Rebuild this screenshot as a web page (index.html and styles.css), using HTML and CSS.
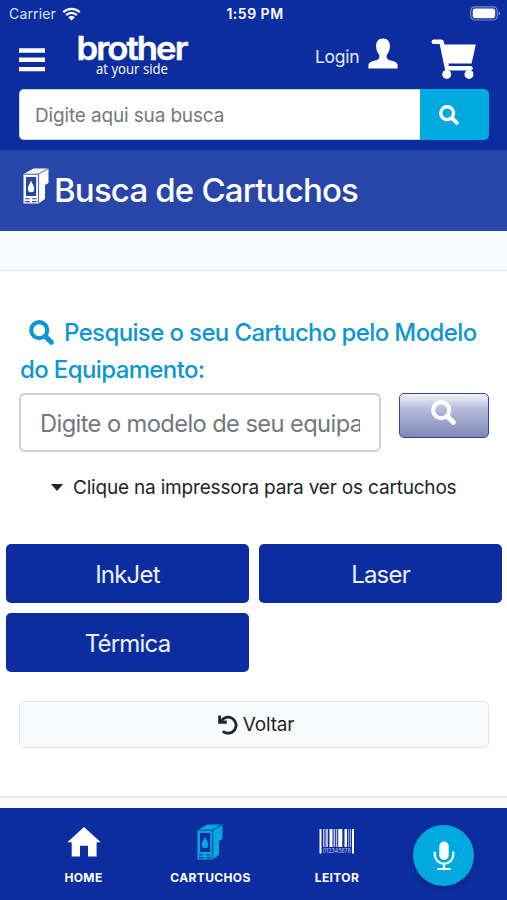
FILE: index.html
```html
<!DOCTYPE html>
<html lang="pt-br">
<head>
    <meta charset="UTF-8">
    <meta name="viewport" content="width=device-width, initial-scale=1.0">
    <title>Busca de Cartuchos</title>
    <link rel="stylesheet" href="styles.css">
</head>
<body>
    <!-- Ícones reutilizados -->
    <svg class="sprite" width="0" height="0">
        <symbol id="icon-search" viewBox="0 0 24 24">
            <circle cx="9.8" cy="9.8" r="7.7" fill="none" stroke="currentColor" stroke-width="4"/>
            <path d="M15.8 15.8L21.4 21.4" stroke="currentColor" stroke-width="4.8" stroke-linecap="round"/>
        </symbol>
        <symbol id="icon-cartridge" viewBox="0 0 26 36">
            <path fill="currentColor" d="M0.5 6L10.5 0.5H25.5V15L22 17V31L15.5 35.5H0.5Z"/>
            <path class="cut" d="M1 6.2H15.3L25 0.8M15.6 6.2V35" fill="none" stroke-width="0.9"/>
            <path class="cut-fill" d="M3 9H13.2V28H3ZM2 30.2H6.8V31.3H2ZM9 30.2H13.8V31.3H9ZM2 33H6.8V34.2H2ZM9 33H13.8V34.2H9Z"/>
            <path fill="currentColor" d="M8 12.5C9 16 11.3 17.8 11.3 20.8A3.2 3.5 0 0 1 4.8 20.8C4.8 17.8 7 16 8 12.5Z"/>
        </symbol>
    </svg>

    <header class="header">
        <div class="status-bar">
            <div class="carrier">
                <span class="carrier-name">Carrier</span>
                <svg width="19" height="14" viewBox="0 0 19 14">
                    <path d="M1.3 5.2A11.6 11.6 0 0 1 17.7 5.2M4.2 8.1A7.5 7.5 0 0 1 14.8 8.1" fill="none" stroke="#fff" stroke-width="2.3"/>
                    <path d="M9.5 13.6L6.2 10.3A4.8 4.8 0 0 1 12.8 10.3Z" fill="#fff"/>
                </svg>
            </div>
            <span class="clock">1:59 PM</span>
            <svg class="battery" width="31" height="15" viewBox="0 0 31 15">
                <rect x="0.8" y="0.8" width="26.4" height="13.2" rx="4" fill="none" stroke="#7889cb" stroke-width="1.2"/>
                <rect x="2.7" y="2.6" width="22.5" height="9.6" rx="2.3" fill="#fff"/>
                <path d="M28.6 5.2Q30.3 6 30.3 7.4T28.6 9.6Z" fill="#7889cb"/>
            </svg>
        </div>

        <div class="top-bar">
            <svg class="menu" width="26" height="24" viewBox="0 0 26 24">
                <path d="M0 2.5H26M0 11.8H26M0 21.1H26" stroke="#fff" stroke-width="4.4"/>
            </svg>
            <svg class="logo" width="114" height="52" viewBox="0 0 114 52">
                <text class="logo-name" x="-0.5" y="31.5" textLength="110" lengthAdjust="spacingAndGlyphs">brother</text>
                <text class="logo-tag" x="19" y="45.5" textLength="72" lengthAdjust="spacingAndGlyphs">at your side</text>
            </svg>
            <span class="login">Login</span>
            <svg class="user" width="30" height="31" viewBox="0 0 30 31">
                <path fill="#fff" d="M15 0.5C19.6 0.5 22.2 4 21.9 8.6C21.7 12 20.8 14.5 18.8 16.8C18.2 19.2 18.8 21 21 22C25 23.3 29.2 23.7 29.6 27V30.4H0.4V27C0.8 23.7 5 23.3 9 22C11.2 21 11.8 19.2 11.2 16.8C9.2 14.5 8.3 12 8.1 8.6C7.8 4 10.4 0.5 15 0.5Z"/>
            </svg>
            <svg class="cart" width="46" height="41" viewBox="0 0 46 41">
                <path d="M2.8 2.8H10.5L16.2 29.8" fill="none" stroke="#fff" stroke-width="4.6" stroke-linecap="round" stroke-linejoin="round"/>
                <path fill="#fff" d="M10 5.4H44.8L40.6 24.6H14.3Z"/>
                <path fill="#fff" d="M15 27H39.5A1.5 1.5 0 0 1 39.5 31.6H15Z"/>
                <circle cx="15.7" cy="35.4" r="4.5" fill="#fff"/>
                <circle cx="38" cy="35.4" r="4.5" fill="#fff"/>
            </svg>
        </div>

        <div class="search">
            <input class="search-input" type="text" placeholder="Digite aqui sua busca">
            <button class="search-button"><svg width="20" height="20"><use href="#icon-search"/></svg></button>
        </div>
    </header>

    <div class="page-title">
        <svg width="26" height="36"><use href="#icon-cartridge"/></svg>
        <h1>Busca de Cartuchos</h1>
    </div>
    <div class="breadcrumb"></div>

    <main class="content">
        <h2 class="subtitle">
            <svg width="25" height="25"><use href="#icon-search"/></svg><span class="line-one">Pesquise o seu Cartucho pelo Modelo</span>
            <span class="line-two">do Equipamento:</span>
        </h2>

        <div class="model-search">
            <input class="model-input" type="text" placeholder="Digite o modelo de seu equipamento">
            <button class="model-button"><svg width="25" height="25"><use href="#icon-search"/></svg></button>
        </div>

        <p class="hint"><span class="caret"></span><span>Clique na impressora para ver os cartuchos</span></p>

        <div class="types">
            <button class="type-button">InkJet</button>
            <button class="type-button">Laser</button>
            <button class="type-button">Térmica</button>
        </div>

        <button class="back-button">
            <svg width="20" height="20" viewBox="0 0 20 20">
                <path d="M3.2 6.2A8 8 0 1 1 4.8 16.2" fill="none" stroke="#212529" stroke-width="2.8"/>
                <path d="M0.2 0.4H3V5.6H8.8V8.8H0.2Z" fill="#212529"/>
            </svg>
            <span>Voltar</span>
        </button>
    </main>

    <nav class="bottom-nav">
        <a class="nav-item">
            <svg width="34" height="36" viewBox="0 0 34 36">
                <path fill="#fff" d="M17 3L33.7 18.2H29.6V32.6H21V21.7H13V32.6H4.7V18.2H0.4Z"/>
            </svg>
            <span>HOME</span>
        </a>
        <a class="nav-item active">
            <svg width="26" height="36"><use href="#icon-cartridge"/></svg>
            <span>CARTUCHOS</span>
        </a>
        <a class="nav-item">
            <svg width="36" height="36" viewBox="0 0 36 36">
                <path fill="#fff" d="M0.5 5H2.5V29.5H0.5ZM33 5H35V29.5H33ZM10.5 5H13.5V23H10.5ZM19.3 5H23.3V23H19.3ZM25.5 5H28V23H25.5Z"/>
                <path fill="#b4bee4" d="M4 5H5.5V23H4ZM6.5 5H9V23H6.5ZM14.5 5H16V23H14.5ZM16.8 5H18.3V23H16.8ZM29.2 5H30.2V23H29.2ZM31.1 5H32V23H31.1Z"/>
                <text class="barcode-digits" x="3.8" y="29.2" textLength="28" lengthAdjust="spacingAndGlyphs">012345678</text>
            </svg>
            <span>LEITOR</span>
        </a>
        <button class="mic">
            <svg width="22" height="30" viewBox="0 0 22 30">
                <rect x="6.3" y="0.5" width="9.4" height="18.5" rx="4.7" fill="#fff"/>
                <path d="M1.7 11.5V13.5A9.3 9.3 0 0 0 20.3 13.5V11.5M11 22.5V27.5M5.2 28H16.8" fill="none" stroke="#fff" stroke-width="2.2" stroke-linecap="round"/>
            </svg>
        </button>
    </nav>
</body>
</html>
```
FILE: styles.css
```css
/* Estilos base */
* {
    box-sizing: border-box;
}

body {
    margin: 0;
    height: 900px;
    display: flex;
    flex-direction: column;
    overflow: hidden;
    font-family: Inter, "Liberation Sans", sans-serif;
    color: #212529;
    background-color: #f8fafb;
}

button, input {
    font-family: inherit;
    margin: 0;
}

svg {
    display: block;
    flex: none;
}

.sprite {
    position: absolute;
}

/* Cabeçalho */
.header {
    height: 150px;
    background-color: #0c2d9f;
    color: #fff;
}

.status-bar {
    display: grid;
    grid-template-columns: 1fr auto 1fr;
    align-items: center;
    height: 27px;
    padding: 0 6px 0 9px;
}

.carrier {
    display: flex;
    align-items: center;
    gap: 6px;
    font-size: 14px;
    letter-spacing: 0.15px;
    color: #dfe4f5;
}

.clock {
    font-size: 14px;
    font-weight: 600;
    letter-spacing: 0.5px;
}

.battery {
    justify-self: end;
}

.top-bar {
    display: flex;
    align-items: flex-start;
    height: 62px;
    padding: 7px 0 0 19px;
}

.menu {
    margin-top: 14px;
}

.logo {
    margin: -6px 0 0 32px;
}

.logo-name {
    font-family: Inter, sans-serif;
    font-size: 32px;
    font-weight: 600;
    letter-spacing: -1.8px;
    fill: #fff;
    stroke: #fff;
    stroke-width: 0.4px;
}

.logo-tag {
    font-family: "Open Sans", sans-serif;
    font-size: 14.5px;
    fill: #fff;
}

.login {
    margin: 12px 0 0 124px;
    font-size: 17.5px;
    letter-spacing: -0.3px;
    line-height: 22px;
    color: #e4e9f8;
}

.user {
    margin: 4px 0 0 9px;
}

.cart {
    margin: 5px 0 0 33px;
}

.search {
    display: flex;
    height: 51px;
    margin: 0 18px 0 19px;
}

.search-input {
    flex: 1;
    min-width: 0;
    padding: 2px 15px 0;
    border: 1px solid #ced4da;
    border-right: 0;
    border-radius: 5px 0 0 5px;
    background-color: #fff;
    font-size: 19px;
    letter-spacing: -0.15px;
}

.search-input::placeholder, .model-input::placeholder {
    color: #73787d;
}

.search-button {
    width: 69px;
    padding: 0 0 0 19px;
    border: 0;
    border-radius: 0 5px 5px 0;
    background-color: #00a9e0;
    color: #fff;
}

/* Título da página */
.page-title {
    display: flex;
    align-items: flex-start;
    height: 81px;
    padding: 18px 0 0 23px;
    background-color: #2846a8;
    color: #fff;
    --cut: #2846a8;
}

.page-title h1 {
    margin: 2px 0 0 5px;
    font-size: 33px;
    line-height: 41px;
    font-weight: 500;
    letter-spacing: -0.82px;
    white-space: nowrap;
}

.cut {
    stroke: var(--cut);
}

.cut-fill {
    fill: var(--cut);
}

.breadcrumb {
    height: 39px;
    background-color: #f8fafb;
}

/* Conteúdo */
.content {
    height: 528px;
    border-top: 1px solid #e2e4e6;
    border-bottom: 2px solid #e6e9ea;
    background-color: #fff;
}

.subtitle {
    display: flex;
    flex-wrap: wrap;
    align-items: center;
    height: 74px;
    margin: 43px 0 0 20px;
    padding-left: 9px;
    font-size: 24px;
    line-height: 37px;
    font-weight: 500;
    letter-spacing: -0.62px;
    color: #0d96d4;
    white-space: nowrap;
}

.line-one {
    margin-left: 10px;
}

.line-two {
    flex-basis: 100%;
    margin-left: -9px;
}

.model-search {
    display: flex;
    justify-content: space-between;
    align-items: flex-start;
    margin: 5px 18px 0 19px;
}

.model-input {
    width: 362px;
    height: 59px;
    padding: 2px 19px 0;
    border: 2px solid #ced0d3;
    border-radius: 6px;
    background-color: #fff;
    font-size: 23.7px;
    letter-spacing: -0.6px;
}

.model-button {
    display: flex;
    justify-content: center;
    width: 90px;
    height: 45px;
    padding: 6px 2px 0 0;
    border: 1.5px solid #3344a8;
    border-radius: 5px;
    background: linear-gradient(#f4f5fb, #b5bbdc 35%, #7e89b5);
    color: #fff;
}

.hint {
    display: flex;
    align-items: center;
    height: 30px;
    margin: 20px 0 0 51px;
    font-size: 19px;
    letter-spacing: -0.19px;
    white-space: nowrap;
}

.caret {
    margin-right: 10px;
    border: 6px solid transparent;
    border-top: 7px solid #212529;
    border-bottom: 0;
}

.types {
    display: grid;
    grid-template-columns: 1fr 1fr;
    gap: 10px;
    margin: 42px 5px 0 6px;
}

.type-button {
    height: 59px;
    padding: 1px 0 0;
    border: 0;
    border-radius: 5px;
    background-color: #0c2d9f;
    color: #eef1fb;
    font-size: 24px;
    letter-spacing: -0.8px;
}

.back-button {
    display: flex;
    justify-content: center;
    align-items: center;
    gap: 5px;
    width: 470px;
    height: 47px;
    margin: 29px 0 0 19px;
    padding: 0 0 0 4px;
    border: 1.5px solid #e3e6e8;
    border-radius: 5px;
    background-color: #f8fafb;
    color: #212529;
    font-size: 19px;
    letter-spacing: -0.2px;
}

/* Menu inferior */
.bottom-nav {
    display: grid;
    grid-template-columns: 127px 127px 126px 127px;
    justify-items: center;
    height: 92px;
    margin-top: auto;
    background-color: #0c2d9f;
    color: #fff;
}

.nav-item {
    display: flex;
    flex-direction: column;
    align-items: center;
    margin-left: 40px;
    padding-top: 16px;
    font-size: 12px;
    line-height: 16px;
    font-weight: 700;
    letter-spacing: 0.35px;
}

.nav-item span {
    margin-top: 10px;
}

.active svg {
    margin-right: 1px;
    color: #00a9e0;
    --cut: #0c2d9f;
}

.barcode-digits {
    font-size: 5.5px;
    font-weight: 400;
    letter-spacing: 0;
    fill: #c5cdec;
}

.mic {
    display: flex;
    justify-content: center;
    align-items: center;
    width: 61px;
    height: 61px;
    margin-top: 17px;
    padding: 0;
    border: 0;
    border-radius: 50%;
    background-color: #00a9e0;
    box-shadow: 0 2px 5px rgba(0, 0, 0, 0.25);
}
```
